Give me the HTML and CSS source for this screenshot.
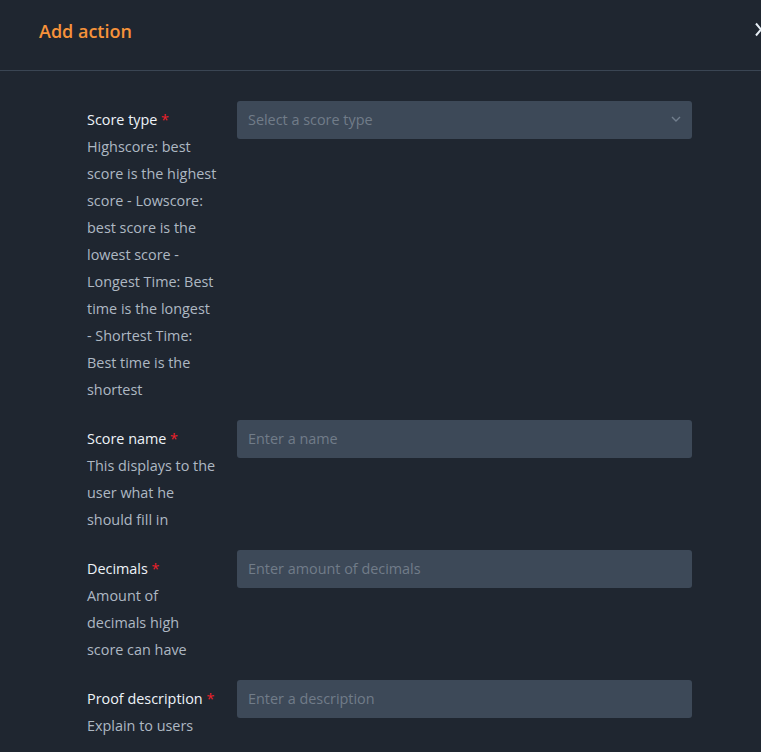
FILE: index.html
```html
<!DOCTYPE html>
<html>
<head>
<meta charset="utf-8">
<link rel="stylesheet" href="styles.css">
</head>
<body>
<div class="modal">
  <div class="modal-header">
    <h2 class="modal-title">Add action</h2>
    <button class="close" aria-label="Close">
      <svg width="12" height="15" viewBox="0 0 12 15"><path d="M1 1.5 L11 13.5 M11 1.5 L1 13.5" stroke="#e6eef5" stroke-width="2" fill="none"/></svg>
    </button>
  </div>
  <div class="modal-body">
    <div class="form-row">
      <div class="label-col">
        <div class="label">Score type <span class="req">*</span></div>
        <div class="desc">Highscore: best score is the highest score - Lowscore: best score is the lowest score - Longest Time: Best time is the longest - Shortest Time: Best time is the shortest</div>
      </div>
      <div class="field select">
        <span class="placeholder">Select a score type</span>
        <svg class="chev" width="10" height="6" viewBox="0 0 10 6"><path d="M1 1 L5 5 L9 1" stroke="#717e8d" stroke-width="1.4" fill="none"/></svg>
      </div>
    </div>
    <div class="form-row">
      <div class="label-col">
        <div class="label">Score name <span class="req">*</span></div>
        <div class="desc">This displays to the user what he should fill in</div>
      </div>
      <div class="field"><span class="placeholder">Enter a name</span></div>
    </div>
    <div class="form-row">
      <div class="label-col">
        <div class="label">Decimals <span class="req">*</span></div>
        <div class="desc">Amount of decimals high score can have</div>
      </div>
      <div class="field"><span class="placeholder">Enter amount of decimals</span></div>
    </div>
    <div class="form-row">
      <div class="label-col">
        <div class="label">Proof description <span class="req">*</span></div>
        <div class="desc">Explain to users</div>
      </div>
      <div class="field"><span class="placeholder">Enter a description</span></div>
    </div>
  </div>
</div>
</body>
</html>
```
FILE: styles.css
```css
html, body {
  margin: 0;
  padding: 0;
  background: #1f2630;
  overflow: hidden;
  height: 100%;
}
body {
  font-family: "Open Sans", "Noto Sans", sans-serif;
}
.modal {
  width: 800px;
  background: #1f2630;
}
.modal-header {
  height: 71px;
  box-sizing: border-box;
  display: flex;
  align-items: flex-start;
  justify-content: space-between;
  padding: 18px 33px 0 39px;
  border-bottom: 1px solid #3a4553;
}
.modal-title {
  margin: 0;
  font-size: 18px;
  line-height: 26px;
  font-weight: 600;
  color: #f7923a;
}
.close {
  margin-top: 4px;
  width: 12px;
  height: 15px;
  padding: 0;
  border: 0;
  background: none;
  display: block;
}
.close svg { display: block; }
.modal-body {
  padding: 30px 0 0 87px;
  display: flex;
  flex-direction: column;
  gap: 16px;
}
.form-row {
  display: grid;
  grid-template-columns: 150px 455px;
  align-items: start;
}
.label-col {
  padding: 5px 20px 0 0;
  margin-bottom: 1px;
  font-size: 14.4px;
  line-height: 27px;
}
.label {
  color: #eef3f8;
}
.req {
  color: #f0202a;
}
.desc {
  color: #aeb8c3;
}
.field {
  height: 38px;
  box-sizing: border-box;
  background: #3d4958;
  border-radius: 3px;
  display: flex;
  align-items: center;
  padding: 0 11px 2px;
  font-size: 14.4px;
}
.placeholder {
  color: #717c89;
}
.select {
  justify-content: space-between;
}
.chev {
  display: block;
}
```
